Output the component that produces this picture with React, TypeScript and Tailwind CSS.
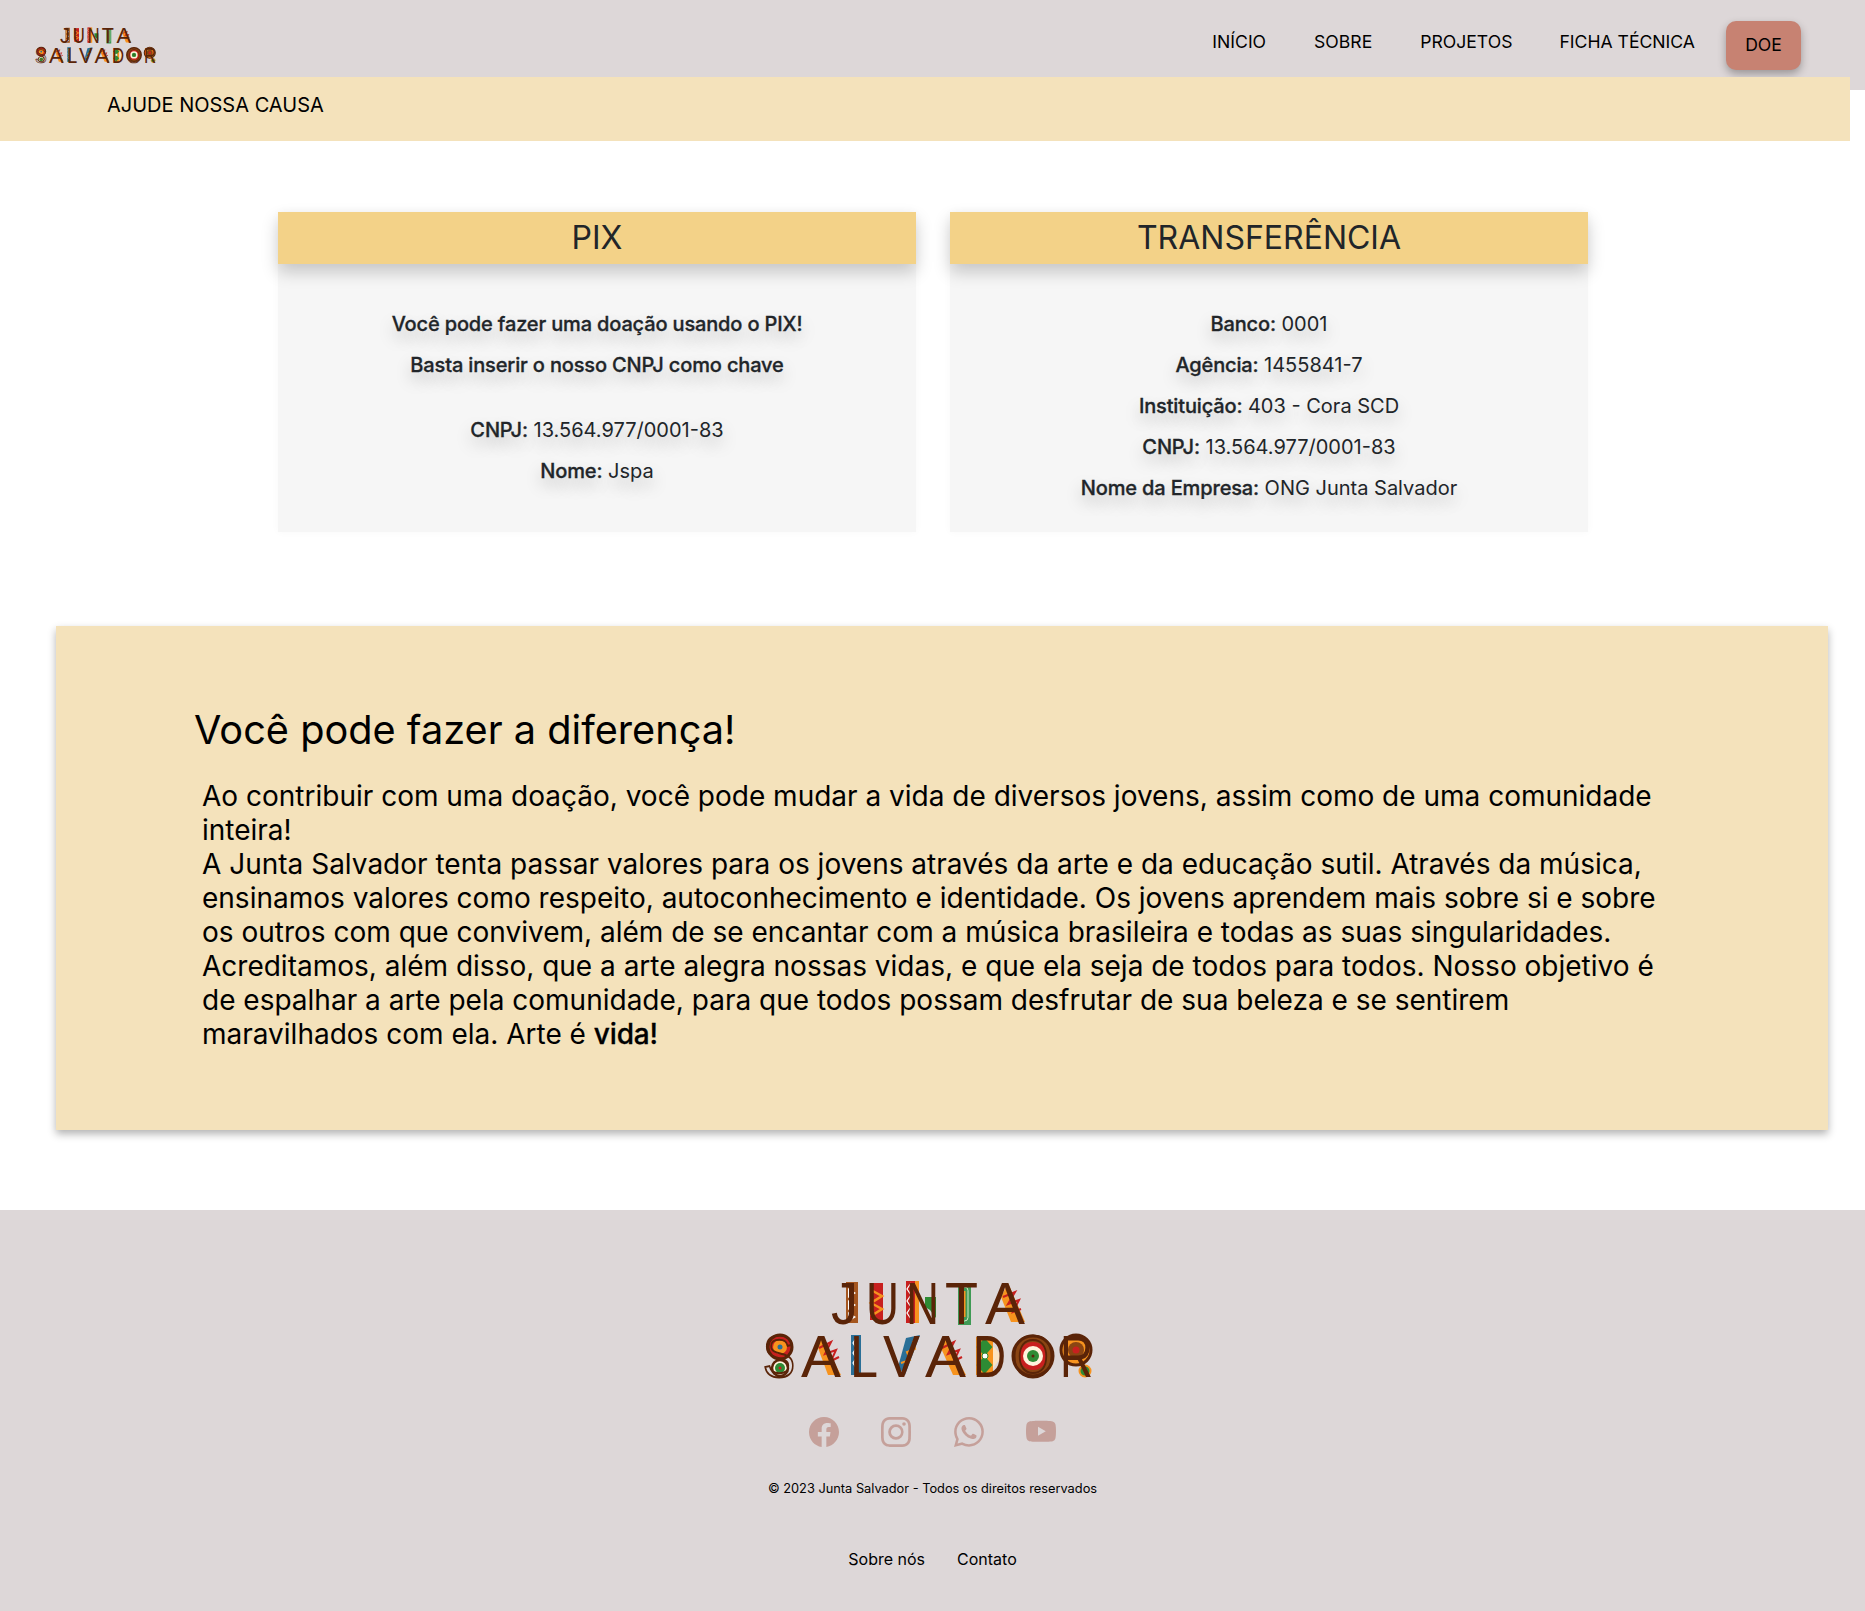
import { BsFacebook, BsInstagram, BsWhatsapp, BsYoutube } from "react-icons/bs";

const brown = "#5a2408";

const letters = [
  { c: "J", x: 68, y: 44, w: 27 },
  { c: "U", x: 103, y: 44, w: 33 },
  { c: "N", x: 143, y: 44, w: 33 },
  { c: "T", x: 182, y: 44, w: 33 },
  { c: "A", x: 222, y: 44, w: 40 },
  { c: "S", x: 0, y: 97, w: 32 },
  { c: "A", x: 38, y: 97, w: 40 },
  { c: "L", x: 87, y: 97, w: 28 },
  { c: "V", x: 120, y: 97, w: 37 },
  { c: "A", x: 162, y: 97, w: 41 },
  { c: "D", x: 210, y: 97, w: 33 },
  { c: "O", x: 249, y: 97, w: 42 },
  { c: "R", x: 297, y: 97, w: 33 },
];

// coloured panels that sit behind the letters of the logo
const Logo = ({ className }: { className: string }) => (
  <svg viewBox="0 0 330 98" className={`overflow-visible ${className}`} fontFamily="Liberation Sans, sans-serif">
    <rect x="83" y="2" width="12" height="41" fill="#a5561f" />
    <path d="M85 8l8 5-8 5zM85 20l8 5-8 5zM85 32l8 5-8 5z" fill="#fff" />
    <rect x="107" y="3" width="13" height="37" fill="#c8201f" />
    <path d="M108 10l11 6-11 7 11 6-11 7" fill="none" stroke="#f7931e" strokeWidth="2.5" />
    <rect x="143" y="1" width="9" height="42" fill="#c8201f" />
    <rect x="152" y="1" width="4" height="42" fill="#f7931e" />
    <path d="M148 3l-4 6 4 6-4 6 4 6-4 6 4 6" fill="none" stroke="#fff" strokeWidth="1.2" />
    <path d="M162 17h11v21l-6-8-5-3z" fill="#2e8b34" />
    <rect x="195" y="3" width="13" height="42" fill="#3f9a55" />
    <rect x="198" y="7" width="7" height="34" rx="3.5" fill="none" stroke="#cfe8c8" strokeWidth="1" />
    <rect x="200.5" y="11" width="2" height="26" fill="#f7931e" />
    <path d="M245 3l17 39h-14l-10-25z" fill="#f7931e" />
    <path d="M240 17l12-5-7 12 11-4-6 12 8-3" fill="none" stroke="#c8201f" strokeWidth="2" />

    <circle cx="17" cy="67" r="12" fill="#c8201f" stroke={brown} strokeWidth="3" />
    <circle cx="17" cy="67" r="7" fill="#f7931e" />
    <circle cx="17" cy="67" r="2.5" fill="#2a6f97" />
    <circle cx="17" cy="88" r="8" fill="#fff3dc" stroke={brown} strokeWidth="2.5" />
    <circle cx="17" cy="88" r="5" fill="#2e8b34" />
    <circle cx="17" cy="88" r="1.5" fill="#c8201f" />

    <path d="M58 57l20 38H65L55 68z" fill="#f7931e" />
    <path d="M56 68l12-6-6 12 11-4-5 11 8-4" fill="none" stroke="#c8201f" strokeWidth="2" />
    <rect x="88" y="55" width="10" height="40" fill="#2a6f97" />
    <path d="M93 58l-3 5 3 5-3 5 3 5-3 5 3 5" fill="none" stroke="#fff" strokeWidth="1.2" />
    <path d="M157 55l-15 40-7-8 8-29z" fill="#2a6f97" />
    <path d="M138 83l9-3-3-8 8-3-2-8" fill="none" stroke="#f7931e" strokeWidth="2" />
    <path d="M183 57l20 38h-13l-12-27z" fill="#f7931e" />
    <path d="M179 68l12-6-6 12 11-4-5 11 8-4" fill="none" stroke="#c8201f" strokeWidth="2" />
    <rect x="213" y="57" width="17" height="38" fill="#f7931e" />
    <path d="M221.5 58l8 9-8 9-8-9zM221.5 76l8 9-8 9-8-9z" fill="#2e8b34" />
    <path d="M230 66l9 10-9 12z" fill="#fbe3c2" />
    <circle cx="222" cy="76" r="3" fill="#fff" stroke="#2e8b34" />

    <circle cx="270" cy="76" r="20" fill="#8a4513" stroke={brown} strokeWidth="3" />
    <circle cx="270" cy="76" r="14" fill="#c8201f" />
    <circle cx="270" cy="76" r="10" fill="#fff3dc" />
    <circle cx="270" cy="76" r="6" fill="#2e8b34" />
    <circle cx="270" cy="76" r="1.5" fill="#5a2408" />
    <circle cx="313" cy="70" r="15" fill="#f7931e" stroke={brown} strokeWidth="3" />
    <circle cx="313" cy="70" r="8" fill="#8a4513" />
    <circle cx="313" cy="70" r="3.5" fill="#c8201f" />
    <circle cx="322" cy="91" r="5.5" fill="#2e8b34" stroke="#f7931e" strokeWidth="2" />

    {letters.map((l, i) => (
      <text
        key={i}
        x={l.x}
        y={l.y}
        fontSize="60"
        fill={i > 4 && (l.c === "O" || l.c === "S") ? "none" : brown}
        stroke={i > 4 && (l.c === "O" || l.c === "S") ? brown : "none"}
        strokeWidth="2"
        textLength={l.w}
        lengthAdjust="spacingAndGlyphs"
      >
        {l.c}
      </text>
    ))}
  </svg>
);

const bold = "font-medium tracking-[-0.15px] [-webkit-text-stroke:0.3px]";

const Line = ({ label, value }: { label: string; value: string }) => (
  <p className="leading-[41px]">
    <span className={bold}>{label}</span> {value}
  </p>
);

const Card = ({ title, children }: { title: string; children: React.ReactNode }) => (
  <div className="w-[638px] h-[320px] bg-[#f6f6f6] shadow-[0_0_8px_rgba(0,0,0,0.03)]">
    <h2 className="h-[52px] bg-[#f3d288] text-center text-[32px] leading-[51px] text-[#212529] shadow-[0_8px_16px_rgba(0,0,0,0.2)]">
      {title}
    </h2>
    <div className="pt-[40px] text-center text-[20px] text-[#212529] [text-shadow:0_8px_16px_rgba(0,0,0,0.25)]">
      {children}
    </div>
  </div>
);

export default function App() {
  return (
    <div className="w-[1865px] bg-white font-[Inter,sans-serif] text-black">
      <nav className="h-[90px] bg-[#ddd7d8] flex justify-between pl-[35px] pr-[64px]">
        <Logo className="w-[121px] h-[36px] mt-[27px]" />
        <div className="flex h-[84px] items-center text-[17.6px]">
          <a className="mr-[48px]">INÍCIO</a>
          <a className="mr-[48px]">SOBRE</a>
          <a className="mr-[47px]">PROJETOS</a>
          <a className="mr-[31px]">FICHA TÉCNICA</a>
          <button className="w-[75px] h-[49px] mt-[6px] rounded-[10px] bg-[#c78272] shadow-[0_4px_8px_rgba(0,0,0,0.3)]">
            DOE
          </button>
        </div>
      </nav>

      <div className="-mt-[13px] relative w-[1850px] h-[64px] bg-[#f4e2bb] pl-[107px] text-[20px] leading-[57px]">
        AJUDE NOSSA CAUSA
      </div>

      <section className="mt-[71px] ml-[278px] flex gap-[34px]">
        <Card title="PIX">
          <p className={`leading-[41px] ${bold}`}>Você pode fazer uma doação usando o PIX!</p>
          <p className={`leading-[41px] mb-[24px] ${bold}`}>Basta inserir o nosso CNPJ como chave</p>
          <Line label="CNPJ:" value="13.564.977/0001-83" />
          <Line label="Nome:" value="Jspa" />
        </Card>
        <Card title="TRANSFERÊNCIA">
          <Line label="Banco:" value="0001" />
          <Line label="Agência:" value="1455841-7" />
          <Line label="Instituição:" value="403 - Cora SCD" />
          <Line label="CNPJ:" value="13.564.977/0001-83" />
          <Line label="Nome da Empresa:" value="ONG Junta Salvador" />
        </Card>
      </section>

      <section className="mt-[94px] ml-[56px] w-[1772px] h-[504px] bg-[#f4e2bb] pt-[80px] pl-[138px] shadow-[0_4px_8px_rgba(0,0,0,0.3)]">
        <h1 className="text-[39.7px] leading-[48px]">Você pode fazer a diferença!</h1>
        <p className="mt-[25px] ml-[8px] w-[1470px] text-[28px] leading-[34px]">
          Ao contribuir com uma doação, você pode mudar a vida de diversos jovens, assim como de uma comunidade inteira!
          <br />
          A Junta Salvador tenta passar valores para os jovens através da arte e da educação sutil. Através da música,
          ensinamos valores como respeito, autoconhecimento e identidade. Os jovens aprendem mais sobre si e sobre os
          outros com que convivem, além de se encantar com a música brasileira e todas as suas singularidades.
          <br />
          Acreditamos, além disso, que a arte alegra nossas vidas, e que ela seja de todos para todos. Nosso objetivo é
          de espalhar a arte pela comunidade, para que todos possam desfrutar de sua beleza e se sentirem maravilhados
          com ela. Arte é <strong className={bold}>vida!</strong>
        </p>
      </section>

      <footer className="mt-[80px] h-[402px] bg-[#ddd7d8] flex flex-col items-center pt-[70px]">
        <Logo className="w-[330px] h-[98px] -ml-[10px]" />
        <div className="mt-[39px] flex gap-[42.5px] text-[30px] text-[#c5a09a]">
          <BsFacebook />
          <BsInstagram />
          <BsWhatsapp />
          <BsYoutube />
        </div>
        <p className="mt-[34px] text-[12.8px] leading-[16px]">© 2023 Junta Salvador - Todos os direitos reservados</p>
        <div className="mt-[50px] flex gap-[32px] text-[16px]">
          <a>Sobre nós</a>
          <a>Contato</a>
        </div>
      </footer>
    </div>
  );
}
